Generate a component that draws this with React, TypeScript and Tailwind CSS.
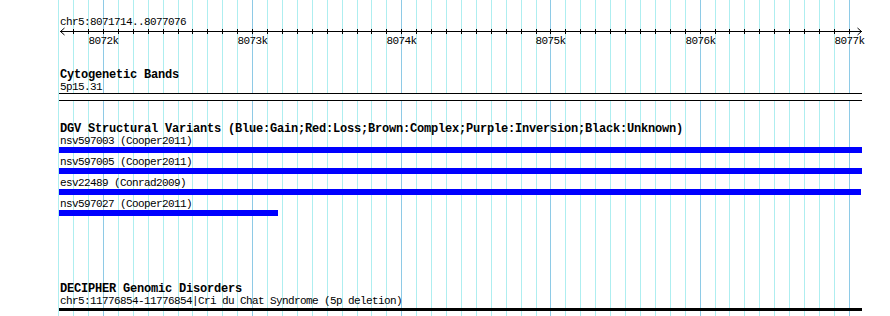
import React from "react";

// grid / ruler geometry, measured off the picture
const TICK0 = 103; // x of 8072k
const STEP = 14.915; // px per 100 bp
const xAt = (k: number) => Math.round(TICK0 + k * STEP);
const steps: number[] = [];
for (let k = -3; k <= 50; k++) steps.push(k);

const MONO = "font-['Liberation_Mono','DejaVu_Sans_Mono',monospace]";

const features = [
  { name: "nsv597003 (Cooper2011)", width: "w-[803px]" },
  { name: "nsv597005 (Cooper2011)", width: "w-[803px]" },
  { name: "esv22489 (Conrad2009)", width: "w-[802px]" },
  { name: "nsv597027 (Cooper2011)", width: "w-[219px]" },
];

function Grid() {
  return (
    <svg className="absolute inset-0" width={890} height={316} shapeRendering="crispEdges">
      {steps.map((k) => (
        <line
          key={k}
          x1={xAt(k) + 0.5}
          x2={xAt(k) + 0.5}
          y1={0}
          y2={316}
          stroke={k % 10 === 0 ? "#8ecae6" : "#aeeef0"}
        />
      ))}
    </svg>
  );
}

function Ruler() {
  return (
    <svg width={890} height={50} className="block" shapeRendering="crispEdges">
      <text
        x={60}
        y={25}
        fontFamily="Liberation Mono, monospace"
        fontSize={11}
        letterSpacing={-0.6}
        fill="#000"
      >
        chr5:8071714..8077076
      </text>
      <line x1={60} x2={862} y1={31.5} y2={31.5} stroke="#000" />
      {/* arrow heads */}
      <polyline points="64.5,28 60.5,31.5 64.5,35" fill="none" stroke="#000" shapeRendering="auto" />
      <polyline points="857.5,28 861.5,31.5 857.5,35" fill="none" stroke="#000" shapeRendering="auto" />
      {steps
        .filter((k) => xAt(k) > 61)
        .map((k) => (
          <line key={k} x1={xAt(k) + 0.5} x2={xAt(k) + 0.5} y1={29} y2={34} stroke="#000" />
        ))}
      {[0, 1, 2, 3, 4, 5].map((i) => (
        <text
          key={i}
          x={xAt(i * 10) + 0.5}
          y={44}
          textAnchor="middle"
          fontFamily="Liberation Mono, monospace"
          fontSize={11}
          letterSpacing={-0.6}
          fill="#000"
        >
          {8072 + i}k
        </text>
      ))}
    </svg>
  );
}

function Title({ children }: { children: React.ReactNode }) {
  return (
    <div className={`${MONO} font-bold text-[12px] leading-[12px] h-[12px] tracking-[-0.2px] text-black whitespace-nowrap pl-[1px]`}>
      {children}
    </div>
  );
}

function Label({ children, tall }: { children: React.ReactNode; tall?: boolean }) {
  return (
    <div
      className={`${MONO} text-[11px] tracking-[-0.6px] text-black whitespace-nowrap pl-[1px] ${
        tall ? "leading-[12px] h-[12px]" : "leading-[11px] h-[11px]"
      }`}
    >
      {children}
    </div>
  );
}

export default function App() {
  return (
    <div className="relative w-[890px] h-[316px] bg-white overflow-hidden">
      <Grid />
      <div className="relative">
        <Ruler />

        <div className="pl-[59px] w-[862px]">
          {/* Cytogenetic Bands */}
          <div className="pt-[19px]">
            <Title>Cytogenetic Bands</Title>
            <Label tall>5p15.31</Label>
            <div className="h-[8px] w-[803px] border-y border-black bg-white" />
          </div>

          {/* DGV */}
          <div className="mt-[22px]">
            <Title>DGV Structural Variants (Blue:Gain;Red:Loss;Brown:Complex;Purple:Inversion;Black:Unknown)</Title>
            <div className="mt-[1px] flex flex-col gap-[4px]">
              {features.map((f) => (
                <div key={f.name}>
                  <Label>{f.name}</Label>
                  <div className={`h-[6px] bg-[#0000ff] ${f.width}`} />
                </div>
              ))}
            </div>
          </div>

          {/* DECIPHER */}
          <div className="mt-[67px]">
            <Title>DECIPHER Genomic Disorders</Title>
            <div className="mt-[1px]">
              <Label>chr5:11776854-11776854|Cri du Chat Syndrome (5p deletion)</Label>
            </div>
            <div className="mt-[1px] h-[3px] w-[803px] bg-black" />
          </div>
        </div>
      </div>
    </div>
  );
}
